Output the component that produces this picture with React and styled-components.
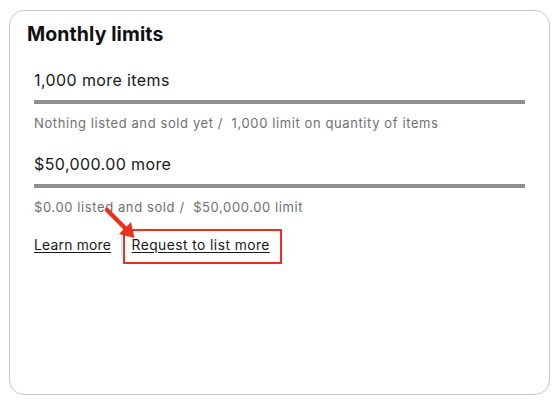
import React from "react";
import styled, { createGlobalStyle } from "styled-components";

const Global = createGlobalStyle`
  html, body { margin: 0; padding: 0; background: #ffffff; }
  body { font-family: Inter, "Open Sans", Arial, sans-serif; color: #191919; }
`;

const Page = styled.div`
  padding: 10px 9px 8px 9px;
  position: relative;
`;

const Card = styled.section`
  box-sizing: border-box;
  width: 541px;
  height: 385px;
  border: 1px solid #c7c7c7;
  border-radius: 15px;
  padding: 11px 24px 0 17px;
  background: #fff;
`;

const Title = styled.h2`
  margin: 0;
  font-size: 19.5px;
  line-height: 24px;
  font-weight: 700;
  letter-spacing: 0.1px;
  color: #111;
`;

const Section = styled.div`
  padding-left: 7px;
`;

const Limit = styled.div`
  margin-top: ${(p) => p.$top}px;
`;

const Amount = styled.div`
  font-size: 16px;
  line-height: 20px;
  letter-spacing: 0.4px;
  color: #191919;
`;

const Bar = styled.div`
  height: 4px;
  background: #8f8f8f;
  margin-top: 10px;
`;

const Note = styled.div`
  font-size: 13px;
  line-height: 16px;
  letter-spacing: 0.6px;
  color: #707070;
  margin-top: 11px;
  white-space: pre;
`;

const Links = styled.div`
  display: flex;
  align-items: baseline;
  margin-top: 14.7px;
`;

const Link = styled.a`
  font-size: 13.8px;
  line-height: 18px;
  letter-spacing: ${(p) => p.$spacing ?? 0.25}px;
  color: #191919;
  text-decoration: underline;
  text-underline-offset: 2px;
  cursor: pointer;
`;

const Divider = styled.span`
  align-self: center;
  width: 1px;
  height: 20px;
  background: #dcdcdc;
  margin: 0 1px 0 10px;
`;

const Highlight = styled.span`
  display: inline-flex;
  align-items: baseline;
  border: 2.5px solid #e8321e;
  padding: 4.5px 10px 8px 6.5px;
`;

const Arrow = styled.svg`
  position: absolute;
  left: 100px;
  top: 200px;
  overflow: visible;
`;

export default function App() {
  return (
    <>
      <Global />
      <Page>
        <Card>
          <Title>Monthly limits</Title>
          <Section>
            <Limit $top={23.5}>
              <Amount>1,000 more items</Amount>
              <Bar />
              <Note>Nothing listed and sold yet /  1,000 limit on quantity of items</Note>
            </Limit>
            <Limit $top={23}>
              <Amount>$50,000.00 more</Amount>
              <Bar />
              <Note>$0.00 listed and sold /  $50,000.00 limit</Note>
            </Limit>
            <Links>
              <Link>Learn more</Link>
              <Divider />
              <Highlight>
                <Link $spacing={0.45}>Request to list more</Link>
              </Highlight>
            </Links>
          </Section>
        </Card>
        <Arrow width="40" height="45" viewBox="0 0 40 45">
          <line x1="7" y1="10" x2="26" y2="29" stroke="#e8321e" strokeWidth="4.5" strokeLinecap="round" />
          <polygon points="19,34 31,22 34.5,38" fill="#e8321e" />
        </Arrow>
      </Page>
    </>
  );
}
